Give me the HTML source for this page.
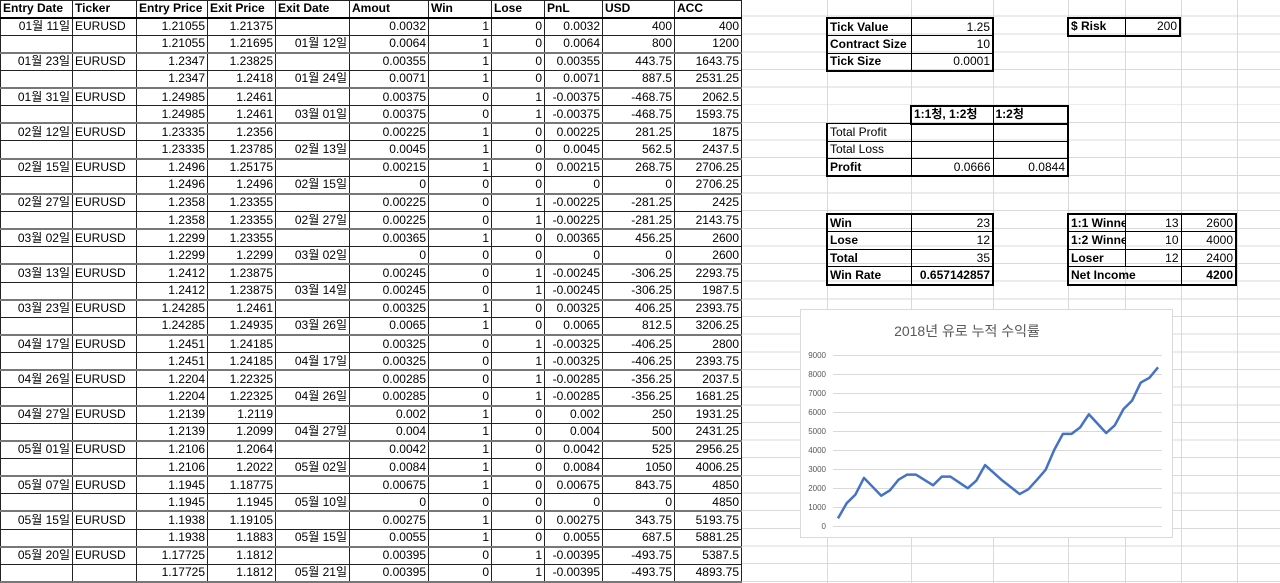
<!DOCTYPE html>
<html><head><meta charset="utf-8">
<style>
*{margin:0;padding:0;box-sizing:border-box}
body{width:1280px;height:583px;overflow:hidden;background:#fff;font-family:"Liberation Sans","Noto Sans CJK KR",sans-serif;font-size:12px;color:#000;position:relative}
#grid{position:absolute;left:742px;top:0;width:538px;height:583px;
background-image:repeating-linear-gradient(to bottom,transparent 0,transparent 16.65px,#d9d9d9 16.65px,#d9d9d9 17.65px);background-position:0 17px}
.vl{position:absolute;top:0;height:583px;width:1px;background:#d9d9d9}
table.m{position:absolute;left:0;top:0;border-collapse:collapse;table-layout:fixed}
table.m td{border:1px solid #222;height:17.65px;padding:0 2px;white-space:nowrap;overflow:hidden;text-align:right;line-height:15px}
table.m tr.h td{font-weight:bold;text-align:left;height:17px;border-bottom:2px solid #000}
table.m td.l{text-align:left}
table.m tr.g td{border-bottom:2px solid #777}
.bx{position:absolute;border-collapse:collapse;table-layout:fixed}
.bx td{border:1px solid #000;height:17.65px;padding:0 2px;white-space:nowrap;overflow:hidden;text-align:right;line-height:15px}
.bx td.l{text-align:left}
.b{font-weight:bold}
.thick{border:2px solid #000}
</style></head><body>
<div id="grid"></div>
<div class="vl" style="left:827px"></div><div class="vl" style="left:911px"></div><div class="vl" style="left:993px"></div><div class="vl" style="left:1068px"></div><div class="vl" style="left:1125px"></div><div class="vl" style="left:1181px"></div><div class="vl" style="left:1237px"></div>

<table class="m">
<colgroup><col style="width:72px"><col style="width:64px"><col style="width:71px"><col style="width:68px"><col style="width:74px"><col style="width:79px"><col style="width:63px"><col style="width:53px"><col style="width:58px"><col style="width:72px"><col style="width:67px"></colgroup>
<tr class="h"><td>Entry Date</td><td>Ticker</td><td>Entry Price</td><td>Exit Price</td><td>Exit Date</td><td>Amout</td><td>Win</td><td>Lose</td><td>PnL</td><td>USD</td><td>ACC</td></tr>
<tr><td>01월 11일</td><td class="l">EURUSD</td><td>1.21055</td><td>1.21375</td><td></td><td>0.0032</td><td>1</td><td>0</td><td>0.0032</td><td>400</td><td>400</td></tr>
<tr class="g"><td></td><td></td><td>1.21055</td><td>1.21695</td><td>01월 12일</td><td>0.0064</td><td>1</td><td>0</td><td>0.0064</td><td>800</td><td>1200</td></tr>
<tr><td>01월 23일</td><td class="l">EURUSD</td><td>1.2347</td><td>1.23825</td><td></td><td>0.00355</td><td>1</td><td>0</td><td>0.00355</td><td>443.75</td><td>1643.75</td></tr>
<tr class="g"><td></td><td></td><td>1.2347</td><td>1.2418</td><td>01월 24일</td><td>0.0071</td><td>1</td><td>0</td><td>0.0071</td><td>887.5</td><td>2531.25</td></tr>
<tr><td>01월 31일</td><td class="l">EURUSD</td><td>1.24985</td><td>1.2461</td><td></td><td>0.00375</td><td>0</td><td>1</td><td>-0.00375</td><td>-468.75</td><td>2062.5</td></tr>
<tr class="g"><td></td><td></td><td>1.24985</td><td>1.2461</td><td>03월 01일</td><td>0.00375</td><td>0</td><td>1</td><td>-0.00375</td><td>-468.75</td><td>1593.75</td></tr>
<tr><td>02월 12일</td><td class="l">EURUSD</td><td>1.23335</td><td>1.2356</td><td></td><td>0.00225</td><td>1</td><td>0</td><td>0.00225</td><td>281.25</td><td>1875</td></tr>
<tr class="g"><td></td><td></td><td>1.23335</td><td>1.23785</td><td>02월 13일</td><td>0.0045</td><td>1</td><td>0</td><td>0.0045</td><td>562.5</td><td>2437.5</td></tr>
<tr><td>02월 15일</td><td class="l">EURUSD</td><td>1.2496</td><td>1.25175</td><td></td><td>0.00215</td><td>1</td><td>0</td><td>0.00215</td><td>268.75</td><td>2706.25</td></tr>
<tr class="g"><td></td><td></td><td>1.2496</td><td>1.2496</td><td>02월 15일</td><td>0</td><td>0</td><td>0</td><td>0</td><td>0</td><td>2706.25</td></tr>
<tr><td>02월 27일</td><td class="l">EURUSD</td><td>1.2358</td><td>1.23355</td><td></td><td>0.00225</td><td>0</td><td>1</td><td>-0.00225</td><td>-281.25</td><td>2425</td></tr>
<tr class="g"><td></td><td></td><td>1.2358</td><td>1.23355</td><td>02월 27일</td><td>0.00225</td><td>0</td><td>1</td><td>-0.00225</td><td>-281.25</td><td>2143.75</td></tr>
<tr><td>03월 02일</td><td class="l">EURUSD</td><td>1.2299</td><td>1.23355</td><td></td><td>0.00365</td><td>1</td><td>0</td><td>0.00365</td><td>456.25</td><td>2600</td></tr>
<tr class="g"><td></td><td></td><td>1.2299</td><td>1.2299</td><td>03월 02일</td><td>0</td><td>0</td><td>0</td><td>0</td><td>0</td><td>2600</td></tr>
<tr><td>03월 13일</td><td class="l">EURUSD</td><td>1.2412</td><td>1.23875</td><td></td><td>0.00245</td><td>0</td><td>1</td><td>-0.00245</td><td>-306.25</td><td>2293.75</td></tr>
<tr class="g"><td></td><td></td><td>1.2412</td><td>1.23875</td><td>03월 14일</td><td>0.00245</td><td>0</td><td>1</td><td>-0.00245</td><td>-306.25</td><td>1987.5</td></tr>
<tr><td>03월 23일</td><td class="l">EURUSD</td><td>1.24285</td><td>1.2461</td><td></td><td>0.00325</td><td>1</td><td>0</td><td>0.00325</td><td>406.25</td><td>2393.75</td></tr>
<tr class="g"><td></td><td></td><td>1.24285</td><td>1.24935</td><td>03월 26일</td><td>0.0065</td><td>1</td><td>0</td><td>0.0065</td><td>812.5</td><td>3206.25</td></tr>
<tr><td>04월 17일</td><td class="l">EURUSD</td><td>1.2451</td><td>1.24185</td><td></td><td>0.00325</td><td>0</td><td>1</td><td>-0.00325</td><td>-406.25</td><td>2800</td></tr>
<tr class="g"><td></td><td></td><td>1.2451</td><td>1.24185</td><td>04월 17일</td><td>0.00325</td><td>0</td><td>1</td><td>-0.00325</td><td>-406.25</td><td>2393.75</td></tr>
<tr><td>04월 26일</td><td class="l">EURUSD</td><td>1.2204</td><td>1.22325</td><td></td><td>0.00285</td><td>0</td><td>1</td><td>-0.00285</td><td>-356.25</td><td>2037.5</td></tr>
<tr class="g"><td></td><td></td><td>1.2204</td><td>1.22325</td><td>04월 26일</td><td>0.00285</td><td>0</td><td>1</td><td>-0.00285</td><td>-356.25</td><td>1681.25</td></tr>
<tr><td>04월 27일</td><td class="l">EURUSD</td><td>1.2139</td><td>1.2119</td><td></td><td>0.002</td><td>1</td><td>0</td><td>0.002</td><td>250</td><td>1931.25</td></tr>
<tr class="g"><td></td><td></td><td>1.2139</td><td>1.2099</td><td>04월 27일</td><td>0.004</td><td>1</td><td>0</td><td>0.004</td><td>500</td><td>2431.25</td></tr>
<tr><td>05월 01일</td><td class="l">EURUSD</td><td>1.2106</td><td>1.2064</td><td></td><td>0.0042</td><td>1</td><td>0</td><td>0.0042</td><td>525</td><td>2956.25</td></tr>
<tr class="g"><td></td><td></td><td>1.2106</td><td>1.2022</td><td>05월 02일</td><td>0.0084</td><td>1</td><td>0</td><td>0.0084</td><td>1050</td><td>4006.25</td></tr>
<tr><td>05월 07일</td><td class="l">EURUSD</td><td>1.1945</td><td>1.18775</td><td></td><td>0.00675</td><td>1</td><td>0</td><td>0.00675</td><td>843.75</td><td>4850</td></tr>
<tr class="g"><td></td><td></td><td>1.1945</td><td>1.1945</td><td>05월 10일</td><td>0</td><td>0</td><td>0</td><td>0</td><td>0</td><td>4850</td></tr>
<tr><td>05월 15일</td><td class="l">EURUSD</td><td>1.1938</td><td>1.19105</td><td></td><td>0.00275</td><td>1</td><td>0</td><td>0.00275</td><td>343.75</td><td>5193.75</td></tr>
<tr class="g"><td></td><td></td><td>1.1938</td><td>1.1883</td><td>05월 15일</td><td>0.0055</td><td>1</td><td>0</td><td>0.0055</td><td>687.5</td><td>5881.25</td></tr>
<tr><td>05월 20일</td><td class="l">EURUSD</td><td>1.17725</td><td>1.1812</td><td></td><td>0.00395</td><td>0</td><td>1</td><td>-0.00395</td><td>-493.75</td><td>5387.5</td></tr>
<tr class="g"><td></td><td></td><td>1.17725</td><td>1.1812</td><td>05월 21일</td><td>0.00395</td><td>0</td><td>1</td><td>-0.00395</td><td>-493.75</td><td>4893.75</td></tr>
</table>

<table class="bx thick" style="left:826px;top:17px;width:168px">
<colgroup><col style="width:84px"><col style="width:82px"></colgroup>
<tr><td class="l b">Tick Value</td><td>1.25</td></tr>
<tr><td class="l b">Contract Size</td><td>10</td></tr>
<tr><td class="l b">Tick Size</td><td>0.0001</td></tr>
</table>

<table class="bx thick" style="left:1067px;top:17px;width:114px">
<colgroup><col style="width:57px"><col style="width:55px"></colgroup>
<tr><td class="l b">$ Risk</td><td>200</td></tr>
</table>

<table class="bx" style="left:910px;top:105px;width:159px;border:2px solid #000">
<colgroup><col style="width:82px"><col style="width:75px"></colgroup>
<tr><td class="l b">1:1청, 1:2청</td><td class="l b">1:2청</td></tr>
</table>
<table class="bx" style="left:826px;top:123px;width:243px;border:2px solid #000;border-top:none">
<colgroup><col style="width:84px"><col style="width:82px"><col style="width:75px"></colgroup>
<tr><td class="l">Total Profit</td><td></td><td></td></tr>
<tr><td class="l">Total Loss</td><td></td><td></td></tr>
<tr><td class="l b">Profit</td><td>0.0666</td><td>0.0844</td></tr>
</table>

<table class="bx thick" style="left:826px;top:213px;width:168px">
<colgroup><col style="width:84px"><col style="width:82px"></colgroup>
<tr><td class="l b">Win</td><td>23</td></tr>
<tr><td class="l b">Lose</td><td>12</td></tr>
<tr><td class="l b">Total</td><td>35</td></tr>
<tr><td class="l b">Win Rate</td><td class="b">0.657142857</td></tr>
</table>

<table class="bx thick" style="left:1067px;top:213px;width:170px">
<colgroup><col style="width:57px"><col style="width:56px"><col style="width:55px"></colgroup>
<tr><td class="l b">1:1 Winne</td><td>13</td><td>2600</td></tr>
<tr><td class="l b">1:2 Winne</td><td>10</td><td>4000</td></tr>
<tr><td class="l b">Loser</td><td>12</td><td>2400</td></tr>
<tr><td class="l b" colspan="2">Net Income</td><td class="b">4200</td></tr>
</table>

<svg style="position:absolute;left:800px;top:309px" width="373" height="229" viewBox="0 0 373 229">
<rect x="0.5" y="0.5" width="372" height="228" fill="#fff" stroke="#d9d9d9"/>
<text x="167" y="27" text-anchor="middle" font-size="14" fill="#595959" font-family="Liberation Sans, Noto Sans CJK KR, sans-serif">2018년 유로 누적 수익률</text>
<g stroke="#d9d9d9" stroke-width="1">
<line x1="33" x2="362" y1="217.5" y2="217.5"/><line x1="33" x2="362" y1="198.5" y2="198.5"/><line x1="33" x2="362" y1="179.5" y2="179.5"/><line x1="33" x2="362" y1="160.5" y2="160.5"/><line x1="33" x2="362" y1="141.5" y2="141.5"/><line x1="33" x2="362" y1="122.5" y2="122.5"/><line x1="33" x2="362" y1="103.5" y2="103.5"/><line x1="33" x2="362" y1="84.5" y2="84.5"/><line x1="33" x2="362" y1="65.5" y2="65.5"/><line x1="33" x2="362" y1="46.5" y2="46.5"/>
</g>
<g font-size="8" fill="#595959" text-anchor="end" font-family="Liberation Sans, sans-serif">
<text x="26" y="220">0</text><text x="26" y="201">1000</text><text x="26" y="182">2000</text><text x="26" y="163">3000</text><text x="26" y="144">4000</text><text x="26" y="125">5000</text><text x="26" y="106">6000</text><text x="26" y="87">7000</text><text x="26" y="68">8000</text><text x="26" y="49">9000</text>
</g>
<g transform="translate(38,217) scale(8.65,-0.019)">
<polyline fill="none" stroke="#4472c4" stroke-width="2.5" stroke-linejoin="round" vector-effect="non-scaling-stroke" points="0,400 1,1200 2,1643.75 3,2531.25 4,2062.5 5,1593.75 6,1875 7,2437.5 8,2706.25 9,2706.25 10,2425 11,2143.75 12,2600 13,2600 14,2293.75 15,1987.5 16,2393.75 17,3206.25 18,2800 19,2393.75 20,2037.5 21,1681.25 22,1931.25 23,2431.25 24,2956.25 25,4006.25 26,4850 27,4850 28,5193.75 29,5881.25 30,5387.5 31,4893.75 32,5300 33,6150 34,6600 35,7550 36,7800 37,8350"/>
</g>
</svg>
</body></html>
